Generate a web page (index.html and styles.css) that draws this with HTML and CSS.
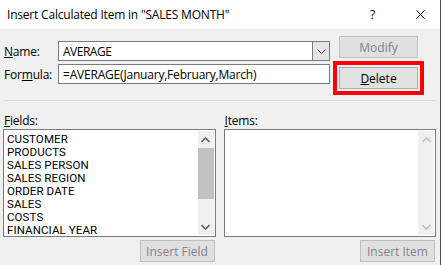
FILE: index.html
```html
<!DOCTYPE html>
<html lang="en">
<head>
    <meta charset="UTF-8">
    <meta name="viewport" content="width=device-width, initial-scale=1.0">
    <title>Insert Calculated Item</title>
    <link rel="stylesheet" href="styles.css">
</head>
<body>
    <div class="dialog">
        <!-- Barra de titulo -->
        <div class="titlebar">
            <span class="title">Insert Calculated Item in "SALES MONTH"</span>
            <span class="help">?</span>
            <svg class="close" width="9" height="9" viewBox="0 0 9 9">
                <path d="M0.5 0.5L8.5 8.5M8.5 0.5L0.5 8.5" stroke="#000" stroke-width="1" fill="none"/>
            </svg>
        </div>

        <div class="content">
            <!-- Nombre y formula -->
            <div class="top">
                <div class="inputs">
                    <div class="row">
                        <label class="lbl"><u>N</u>ame:</label>
                        <div class="combo">
                            <span class="value">AVERAGE</span>
                            <span class="drop">
                                <svg width="9" height="5" viewBox="0 0 9 5">
                                    <path d="M0.5 0.5L4.5 4.5L8.5 0.5" stroke="#333" stroke-width="1" fill="none"/>
                                </svg>
                            </span>
                        </div>
                    </div>
                    <div class="row">
                        <label class="lbl">For<u>m</u>ula:</label>
                        <div class="textbox">=AVERAGE(January,February,March)</div>
                    </div>
                </div>
                <div class="buttons">
                    <button class="btn" disabled>Modify</button>
                    <button class="btn delete"><u>D</u>elete</button>
                </div>
            </div>

            <div class="sep"></div>

            <!-- Listas -->
            <div class="lists">
                <div class="list-col">
                    <label class="lbl"><u>F</u>ields:</label>
                    <div class="listbox">
                        <ul class="items">
                            <li>CUSTOMER</li>
                            <li>PRODUCTS</li>
                            <li>SALES PERSON</li>
                            <li>SALES REGION</li>
                            <li>ORDER DATE</li>
                            <li>SALES</li>
                            <li>COSTS</li>
                            <li>FINANCIAL YEAR</li>
                        </ul>
                        <div class="scrollbar">
                            <span class="arrow up"><svg width="9" height="6" viewBox="0 0 9 6"><path d="M0.5 5L4.5 1L8.5 5" stroke="#606060" stroke-width="1.6" fill="none"/></svg></span>
                            <span class="track"><span class="thumb"></span></span>
                            <span class="arrow down"><svg width="9" height="6" viewBox="0 0 9 6"><path d="M0.5 1L4.5 5L8.5 1" stroke="#606060" stroke-width="1.6" fill="none"/></svg></span>
                        </div>
                    </div>
                    <button class="btn" disabled>Insert Field</button>
                </div>
                <div class="list-col">
                    <label class="lbl"><u>I</u>tems:</label>
                    <div class="listbox">
                        <ul class="items"></ul>
                        <div class="scrollbar off">
                            <span class="arrow up"><svg width="9" height="6" viewBox="0 0 9 6"><path d="M0.5 5L4.5 1L8.5 5" stroke="#bfbfbf" stroke-width="1.6" fill="none"/></svg></span>
                            <span class="track"></span>
                            <span class="arrow down"><svg width="9" height="6" viewBox="0 0 9 6"><path d="M0.5 1L4.5 5L8.5 1" stroke="#bfbfbf" stroke-width="1.6" fill="none"/></svg></span>
                        </div>
                    </div>
                    <button class="btn" disabled>Insert Item</button>
                </div>
            </div>
        </div>
    </div>
</body>
</html>
```

FILE: styles.css
```css
body {
    font-family: "Open Sans", "Noto Sans", sans-serif;
    font-size: 12px;
    background-color: #fff;
    margin: 0;
    color: #000;
}
.dialog {
    width: 440px;
    height: 265px;
    border-right: 1px solid #4d4d4d;
    background-color: #f0f0f0;
}
.titlebar {
    height: 29px;
    background-color: #fff;
    display: flex;
    align-items: center;
    padding-left: 7px;
}
.title {
    flex: 1;
    font-size: 12px;
    letter-spacing: -0.2px;
}
.help {
    width: 8px;
    margin-right: 38px;
    font-size: 12px;
}
.close {
    margin-right: 15px;
}
.content {
    padding: 7px 4px 0 3px;
}
.top {
    display: flex;
}
.inputs {
    padding-top: 5px;
    display: flex;
    flex-direction: column;
    gap: 3px;
}
.row {
    display: flex;
    align-items: center;
}
.lbl {
    display: block;
    width: 54px;
    padding-left: 1px;
    letter-spacing: -0.2px;
}
.combo, .textbox {
    box-sizing: border-box;
    height: 20px;
    width: 272px;
    background-color: #fff;
    border: 1px solid #7a7a7a;
    display: flex;
    align-items: center;
    padding-left: 4px;
    letter-spacing: -0.2px;
}
.combo .value {
    flex: 1;
    letter-spacing: -0.5px;
}
.combo .drop {
    width: 16px;
    align-self: stretch;
    background-color: #e5e5e5;
    border-left: 1px solid #7a7a7a;
    display: flex;
    align-items: center;
    justify-content: center;
}
.buttons {
    margin-left: 9px;
    display: flex;
    flex-direction: column;
    gap: 9px;
}
.btn {
    box-sizing: border-box;
    width: 79px;
    height: 22px;
    background-color: #e1e1e1;
    border: 1px solid #adadad;
    font-family: inherit;
    font-size: 12px;
    color: #000;
    padding: 0;
}
.btn:disabled {
    background-color: #e0e0e0;
    border-color: #bfbfbf;
    color: #838383;
}
.delete {
    outline: 4px solid #ff0000;
    outline-offset: 2px;
}
.sep {
    height: 1px;
    background-color: #d9d9d9;
    margin: 11px 0 0 1px;
}
.lists {
    display: flex;
    gap: 8px;
    margin-top: 11px;
}
.list-col {
    width: 213px;
    display: flex;
    flex-direction: column;
}
.list-col .lbl {
    height: 17px;
}
.listbox {
    box-sizing: border-box;
    height: 108px;
    background-color: #fff;
    border: 1px solid #7a7a7a;
    display: flex;
    padding: 1px;
}
.items {
    flex: 1;
    list-style: none;
    margin: 0;
    padding: 2px 0 0 2px;
    font-family: Roboto, "Open Sans", sans-serif;
    font-size: 11.5px;
    line-height: 13px;
    letter-spacing: 0.1px;
}
.scrollbar {
    width: 16px;
    background-color: #f0f0f0;
    display: flex;
    flex-direction: column;
}
.arrow {
    height: 17px;
    display: flex;
    align-items: center;
    justify-content: center;
}
.track {
    flex: 1;
}
.thumb {
    display: block;
    height: 51px;
    background-color: #c2c2c2;
}
.list-col .btn {
    align-self: flex-end;
    width: 75px;
    margin-top: 3px;
    margin-right: 1px;
}
```
